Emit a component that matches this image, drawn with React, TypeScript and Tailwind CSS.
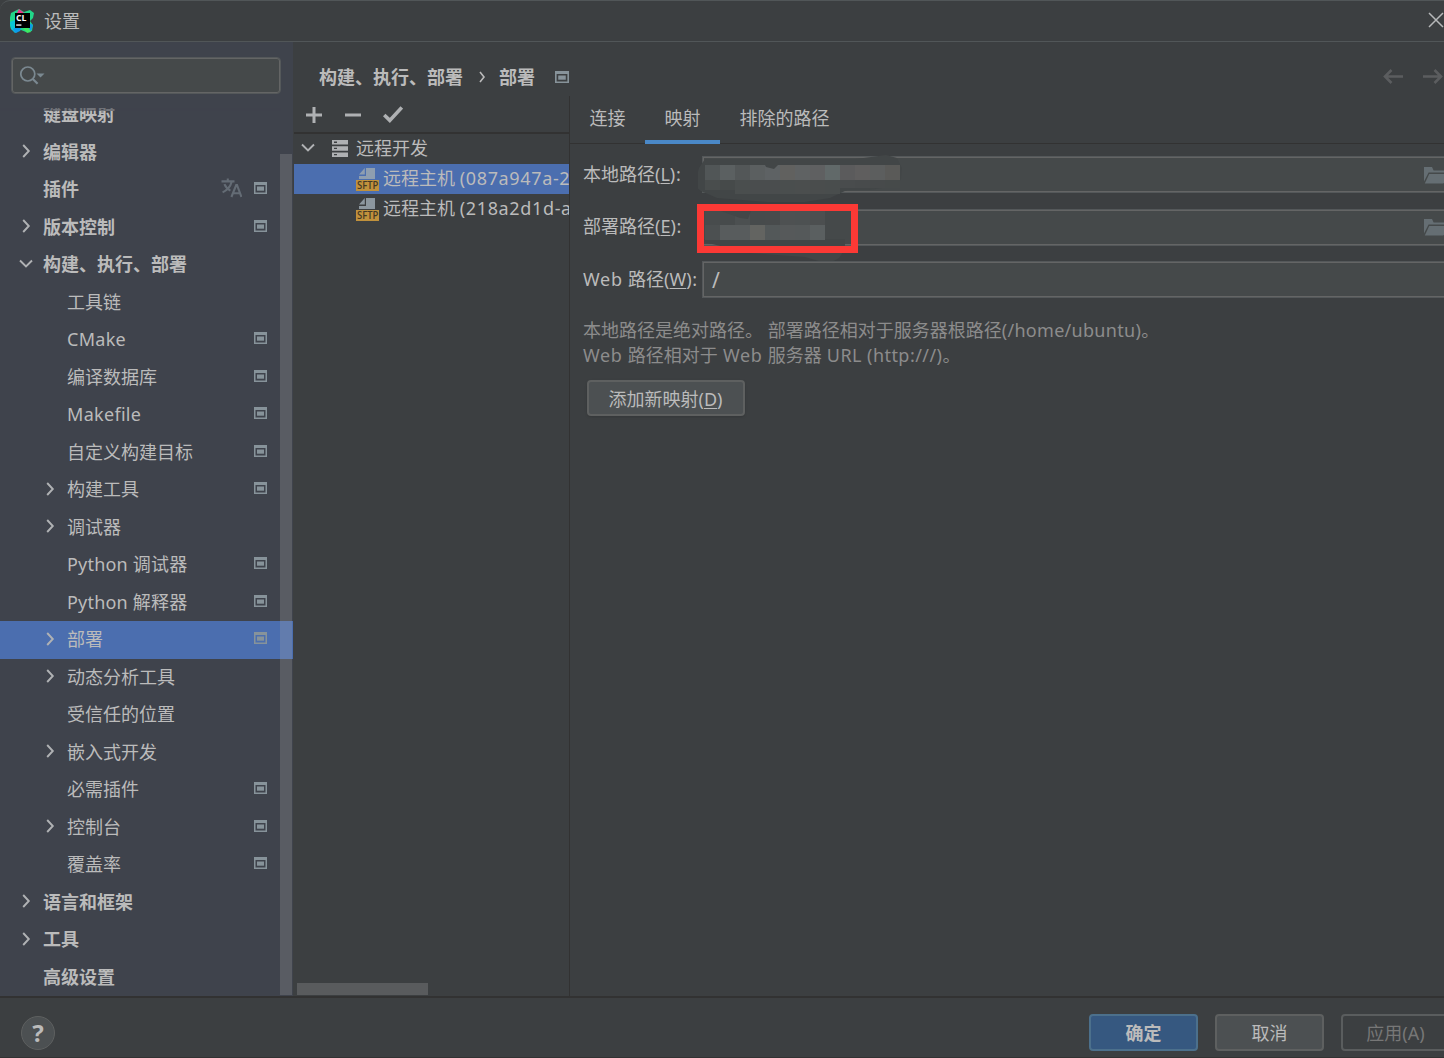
import React from "react";

interface SettingItem {
  label: string;
  level: 0 | 1;
  arrow?: "right" | "down";
  project?: boolean;
  translate?: boolean;
  selected?: boolean;
}

const items: SettingItem[] = [
  { label: "键盘映射", level: 0 },
  { label: "编辑器", level: 0, arrow: "right" },
  { label: "插件", level: 0, project: true, translate: true },
  { label: "版本控制", level: 0, arrow: "right", project: true },
  { label: "构建、执行、部署", level: 0, arrow: "down" },
  { label: "工具链", level: 1 },
  { label: "CMake", level: 1, project: true },
  { label: "编译数据库", level: 1, project: true },
  { label: "Makefile", level: 1, project: true },
  { label: "自定义构建目标", level: 1, project: true },
  { label: "构建工具", level: 1, arrow: "right", project: true },
  { label: "调试器", level: 1, arrow: "right" },
  { label: "Python 调试器", level: 1, project: true },
  { label: "Python 解释器", level: 1, project: true },
  { label: "部署", level: 1, arrow: "right", project: true, selected: true },
  { label: "动态分析工具", level: 1, arrow: "right" },
  { label: "受信任的位置", level: 1 },
  { label: "嵌入式开发", level: 1, arrow: "right" },
  { label: "必需插件", level: 1, project: true },
  { label: "控制台", level: 1, arrow: "right", project: true },
  { label: "覆盖率", level: 1, project: true },
  { label: "语言和框架", level: 0, arrow: "right" },
  { label: "工具", level: 0, arrow: "right" },
  { label: "高级设置", level: 0 },
];

const Chevron = ({ dir }: { dir: "right" | "down" }) => (
  <svg width="14" height="14" viewBox="0 0 14 14" fill="none" stroke="#b0b2b4" strokeWidth="1.9">
    {dir === "right" ? <path d="M4.2 1l5.6 6-5.6 6" /> : <path d="M1 3.5l6 6 6-6" />}
  </svg>
);

const ProjectIcon = ({ width = 13 }: { width?: number }) => (
  <svg width={width} height="12" viewBox="0 0 13 12" preserveAspectRatio="none" className="shrink-0">
    <path fill="#87939a" fillRule="evenodd" d="M0 0h13v12H0zM1.5 3v7.5h10V3z" />
    <rect x="3" y="4.5" width="7" height="4.2" fill="#87939a" />
  </svg>
);

const TranslateIcon = () => (
  <svg width="21" height="20" viewBox="0 0 21 20" fill="none" stroke="#646c75" strokeWidth="2.1">
    <path d="M0.5 3.4h13M6.8 0.5v3M10.6 4c-1 4-4.4 8-9 10.4M3.4 6.2c1 2.4 3.2 5 6 6.4" />
    <path d="M10.4 19l4.8-12h0.8L20.4 19M12 15.2h7" />
  </svg>
);

const SettingRow = ({ item }: { item: SettingItem }) => (
  <div
    className={`flex h-[37.5px] w-full shrink-0 items-center pr-[26px] ${item.selected ? "bg-[#4b6eaf]" : ""} ${
      item.level === 0 ? "pl-[19px] font-bold" : "pl-[43px]"
    }`}
  >
    <span className="-mt-[2px] flex w-6 shrink-0 items-center">{item.arrow && <Chevron dir={item.arrow} />}</span>
    <span
      className={`flex-1 whitespace-nowrap ${item.level === 1 ? "pb-[1.5px]" : "pb-[1px]"} ${
        /^[A-Z][A-Za-z]+$/.test(item.label) ? "tracking-[0.3px]" : ""
      } ${item.label.startsWith("Python") ? "tracking-[0.2px]" : ""}`}
    >
      {item.label}
    </span>
    <span className="-mt-[3.5px] flex items-center gap-3">
      {item.translate && <TranslateIcon />}
      {item.project && <ProjectIcon />}
    </span>
  </div>
);

const Logo = () => (
  <svg width="24" height="24" viewBox="0 0 24 24" className="mb-[1px]">
    <path fill="#21d789" d="M1 4L9 0l5 3 6-2 4 3-1 5-3 3 3 4-1 6-6 1-5-2-5 2-5-3-2-7z" />
    <path fill="#09c6d6" d="M0 13l5-2v9l5 1-5 3-4-4z" />
    <path fill="#0d9be8" d="M4 19h7l-1 3-4 2-3-3zM19 14l4 2-2 6-4-2z" />
    <path fill="#ed358c" d="M9 0l5 4H7z" />
    <path fill="#3dea62" d="M13 19h6l2 4-4 1z" />
    <rect x="5" y="4" width="15" height="15" fill="#000" />
    <text
      x="6"
      y="12"
      fill="#fff"
      fontSize="9"
      fontWeight="700"
      fontFamily="Open Sans, sans-serif"
      textLength="10.5"
      lengthAdjust="spacingAndGlyphs"
    >
      CL
    </text>
    <rect x="6.2" y="15.4" width="5.2" height="1.3" fill="#fff" />
  </svg>
);

const SftpIcon = () => (
  <svg width="23" height="23" viewBox="0 0 23 23" className="shrink-0">
    <path fill="#9aa7b0" fillOpacity="0.85" d="M10 0h9v11H3V8h7zM8.8 0v6.6H3z" />
    <rect y="12" width="23" height="11" fill="#c0913c" />
    <text
      x="1"
      y="21.4"
      fill="#453a24"
      fontSize="10.6"
      fontWeight="600"
      fontFamily="Open Sans, sans-serif"
      textLength="21.4"
      lengthAdjust="spacingAndGlyphs"
    >
      SFTP
    </text>
  </svg>
);

const ServerIcon = () => (
  <svg width="16" height="17" viewBox="0 0 16 17">
    <path
      fill="#afb1b3"
      fillRule="evenodd"
      d="M0 0h16v4.6H0zM2 1.6v1.3h3V1.6zM0 6.2h16v4.6H0zM2 7.8v1.3h3V7.8zM0 12.4h16V17H0zM2 14v1.3h3V14z"
    />
  </svg>
);

const FolderIcon = () => (
  <svg width="24" height="18" viewBox="0 0 24 18" className="mt-[2px] shrink-0">
    <path fill="#656e73" d="M0 0h8l1.6 3.4H21v2.2H4.6L0 14.6z" />
    <path fill="#656e73" d="M5.2 7H24l-4.6 9.6H0.8z" />
  </svg>
);

const Arrow = ({ back }: { back?: boolean }) => (
  <svg width="20" height="15" viewBox="0 0 20 15" fill="none" stroke="#5b5d5f" strokeWidth="2.6">
    {back ? <path d="M20 7.5H2M8.5 1L2 7.5 8.5 14" /> : <path d="M0 7.5h18M11.5 1L18 7.5 11.5 14" />}
  </svg>
);

// smudged-out value, drawn as 15px blocks
const topRow = ["#515657", "#5b6061", "#535758", "#5b5f60", "#5e6264", "#61615f", "#5f6263", "#5f6061", "#616969", "#5b5b5c", "#5f5e5e", "#5c5e5e", "#5a5a58"];
const topShade = ["#494d4d", "#464a4a", "#4a4e4e", "#4a4d4e", "#4a4d4e", "#4a4e4e", "#4b4e4e", "#4a4d4d", "#494d4d", "#494c4d", "#484b4c", "#474a4b", "#464a4a"];
const lowShade = ["#484c4d", "#474b4c", "#4c5051", "#474b4c", "#484b4c", "#4e5152", "#4d5152", "#4c4f50"];
const lowRow = ["#4c5051", "#585c5d", "#585c5d", "#636461", "#535859", "#56595a", "#55595a", "#5a5f60"];

const LocalBlur = () => (
  <svg width="206" height="50" viewBox="0 0 206 50" className="absolute -left-[5px] -top-[5px]">
    <path fill="#424647" d="M1 16L7 7h151l30-4 11 3 5 10-1 11-6 7-26 4h-22l-17 8-38 6-75-6-16-7-7-5z" />
    {topRow.map((c, i) => (
      <rect key={i} x={7 + i * 15} y="13" width="15" height="15" fill={c} />
    ))}
    {topShade.map((c, i) => (
      <rect key={i} x={7 + i * 15} y="28" width="15" height={i > 8 ? 8 : i < 2 ? 10 : 14} fill={c} />
    ))}
    <path fill="#424647" d="M67 13h13l-4 4-8-2z" />
  </svg>
);

const DeployBlur = () => (
  <svg width="161" height="58" viewBox="0 0 161 58" className="absolute -left-[6px] -top-[5.5px]">
    <path fill="#45494a" d="M7 7h72v30H7z" />
    <path fill="#424647" d="M7 35h141v10l-6 9-7 4h-10l-17-5-56-4-45-11z" />
    {lowShade.map((c, i) => (
      <rect key={i} x={8 + i * 15} y="7" width="15" height="14" fill={c} />
    ))}
    {lowRow.map((c, i) => (
      <rect key={i} x={8 + i * 15} y="21" width="15" height="15" fill={c} />
    ))}
    <path fill="#434748" d="M24 7h30l-3 8-8-1z" />
    <rect x="3.5" y="3.5" width="154" height="42" fill="none" stroke="#fc3935" strokeWidth="7" />
  </svg>
);

interface FieldProps {
  label: string;
  mnemonic: string;
  value?: string;
  browse?: boolean;
  children?: React.ReactNode;
}

const Field = ({ label, mnemonic, value, browse, children }: FieldProps) => (
  <div className="flex h-9 items-center">
    <label className="w-[119px] shrink-0 whitespace-nowrap pb-[2px]">
      {label === "Web 路径" ? (
        <>
          <span className="tracking-[0.7px]">Web </span>路径
        </>
      ) : (
        label
      )}
      (<span className="underline underline-offset-2">{mnemonic}</span>
      <span className="tracking-[0.7px]">):</span>
    </label>
    <div className="relative flex h-[37px] w-[752px] shrink-0 items-center justify-between border border-[#54585a] bg-[#45494a] pl-[9px] pr-[5px] shadow-[inset_0_0_0_1px_#646565]">
      <span className="text-[21px]">{value}</span>
      {browse && <FolderIcon />}
      {children}
    </div>
  </div>
);

const tabs = ["连接", "映射", "排除的路径"];
const hosts = [
  { id: "(087a947a-2", selected: true },
  { id: "(218a2d1d-a", selected: false },
];

const App: React.FC = () => {
  return (
    <div className="flex h-[1058px] w-[1444px] flex-col overflow-hidden bg-[#3c3f41] font-['Noto_Sans','Noto_Sans_CJK_SC',sans-serif] text-[18px] leading-6 text-[#bbbbbb]">
      {/* Title bar */}
      <header className="flex h-[42px] shrink-0 items-center rounded-tl-[10px] border-y border-t-[#515658] border-b-[#515658] pl-[10px]">
        <Logo />
        <span className="ml-[10px] flex-1">设置</span>
        <svg width="16" height="16" viewBox="0 0 16 16" stroke="#b6b8b9" strokeWidth="1.5" className="mb-[2px]">
          <path d="M1 1l14 14M15 1L1 15" />
        </svg>
      </header>

      <div className="flex h-[954px] shrink-0">
        {/* Sidebar */}
        <aside className="relative flex w-[293px] shrink-0 flex-col bg-[#3f434c]">
          <div className="ml-[11px] mt-[15px] flex h-[37px] w-[270px] shrink-0 items-center rounded-[4px] border border-[#54585a] bg-[#45494a] pl-2 shadow-[inset_0_0_0_1px_#646565]">
            <svg width="25" height="20" viewBox="0 0 25 20" fill="none" stroke="#7b8991" strokeWidth="1.7">
              <circle cx="7.8" cy="8" r="7" />
              <path d="M12.8 13l4.8 4.8" strokeWidth="2.2" />
              <path d="M16.5 7.5h8l-4 4z" fill="#7b8991" stroke="none" />
            </svg>
          </div>
          <div className="mt-[14px] flex flex-1 flex-col justify-end overflow-hidden">
            {items.map((item) => (
              <SettingRow key={item.label} item={item} />
            ))}
          </div>
          <div className="absolute bottom-[1px] right-[1px] h-[841px] w-3 bg-[#a6a6a6]/25" />
          <div className="absolute left-0 right-3 top-[66px] h-[3px] bg-[#3f434c]/60" />
        </aside>

        <main className="flex w-[1151px] shrink-0 flex-col pl-[1px]">
          <div className="flex h-[54px] shrink-0 items-center pl-[25px] pr-[1px] pt-[15px] font-bold">
            <span>构建、执行、部署</span>
            <svg width="8" height="12" viewBox="0 0 8 12" fill="none" stroke="#bbbbbb" strokeWidth="1.6" className="ml-[15px] mr-[13px]">
              <path d="M2 1l4 5-4 5" />
            </svg>
            <span>部署</span>
            <span className="ml-5 flex-1">
              <ProjectIcon width={14} />
            </span>
            <span className="flex gap-5">
              <Arrow back />
              <Arrow />
            </span>
          </div>

          <div className="flex flex-1">
            {/* Server list */}
            <section className="flex w-[276px] shrink-0 flex-col border-r border-[#323232]">
              <div className="flex h-[38px] shrink-0 items-center gap-[23px] border-b-2 border-[#323232] pl-3 pt-[2px]">
                <svg width="16" height="16" viewBox="0 0 16 16" stroke="#afb1b3" strokeWidth="3">
                  <path d="M0 8h16M8 0v16" />
                </svg>
                <svg width="16" height="16" viewBox="0 0 16 16" stroke="#afb1b3" strokeWidth="3">
                  <path d="M0 8h16" />
                </svg>
                <svg width="20" height="17" viewBox="0 0 20 17" fill="none" stroke="#afb1b3" strokeWidth="3.6" className="-ml-[1px] mb-[1px]">
                  <path d="M1.2 9l5.6 5.4L18.8 1.4" />
                </svg>
              </div>
              <div className="flex h-[30px] shrink-0 items-center pb-[2px] pl-[7px]">
                <Chevron dir="down" />
                <span className="ml-[17px] mr-2 mt-[1px]">
                  <ServerIcon />
                </span>
                远程开发
              </div>
              {hosts.map((host) => (
                <div
                  key={host.id}
                  className={`flex h-[30px] shrink-0 items-center gap-1 overflow-hidden whitespace-nowrap pl-[62px] ${
                    host.selected ? "bg-[#4b6eaf]" : ""
                  }`}
                >
                  <SftpIcon />
                  <span className="pb-[2px]">
                    远程主机 <span className="tracking-[0.65px]">{host.id}</span>
                  </span>
                </div>
              ))}
              <div className="mb-[1px] ml-[3px] mt-auto h-3 w-[131px] bg-[#595b5d]" />
            </section>

            {/* Mapping form */}
            <section className="flex flex-1 flex-col">
              <nav className="flex h-12 shrink-0 border-b border-[#323232]">
                {tabs.map((tab) => (
                  <div
                    key={tab}
                    className={`flex h-12 items-center border-b-4 px-[19.5px] ${
                      tab === "映射" ? "border-[#4a88c7]" : "border-transparent"
                    }`}
                  >
                    {tab}
                  </div>
                ))}
              </nav>
              <div className="flex flex-col gap-[16.5px] pl-[13px] pt-[12.5px]">
                <Field label="本地路径" mnemonic="L" browse>
                  <LocalBlur />
                </Field>
                <Field label="部署路径" mnemonic="E" browse>
                  <DeployBlur />
                </Field>
                <Field label="Web 路径" mnemonic="W" value="/" />
              </div>
              <div className="pl-[13px] pt-5 leading-[25px] text-[#8c8c8c]">
                <p>
                  本地路径是绝对路径。 部署路径相对于服务器根路径<span className="tracking-[0.3px]">(/home/ubuntu)</span>。
                </p>
                <p>
                  <span className="tracking-[0.6px]">Web </span>路径相对于<span className="tracking-[0.6px]"> Web </span>
                  服务器<span className="tracking-[0.45px]"> URL (http:///)</span>。
                </p>
              </div>
              <button className="ml-[17px] mt-3 flex h-9 w-[158px] items-center justify-center rounded-[4px] border-2 border-[#5e6060] bg-[#4c5052] pr-[1px] pt-[2px] shadow-sm">
                添加新映射(<span className="underline underline-offset-2">D</span>)
              </button>
            </section>
          </div>
        </main>
      </div>

      {/* Footer */}
      <footer className="flex h-[62px] shrink-0 items-center border-b border-t-2 border-b-[#323232] border-t-[#323232] pl-[21px] pt-[10px]">
        <div className="flex h-[34px] w-[34px] shrink-0 items-center justify-center rounded-full border border-[#5e6060] bg-[#4c5052] text-[24px] font-bold">
          ?
        </div>
        <button className="ml-[1034px] h-[37px] w-[109px] shrink-0 rounded-[4px] border-2 border-[#4c708c] bg-[#365880] font-bold">
          确定
        </button>
        <button className="ml-[17px] h-[37px] w-[109px] shrink-0 rounded-[4px] border-2 border-[#5e6060] bg-[#4c5052]">
          取消
        </button>
        <button className="ml-[17px] h-[37px] w-[109px] shrink-0 rounded-[4px] border-2 border-[#5a5d5e] text-[#777777]">
          应用(A)
        </button>
      </footer>
    </div>
  );
};

export default App;
